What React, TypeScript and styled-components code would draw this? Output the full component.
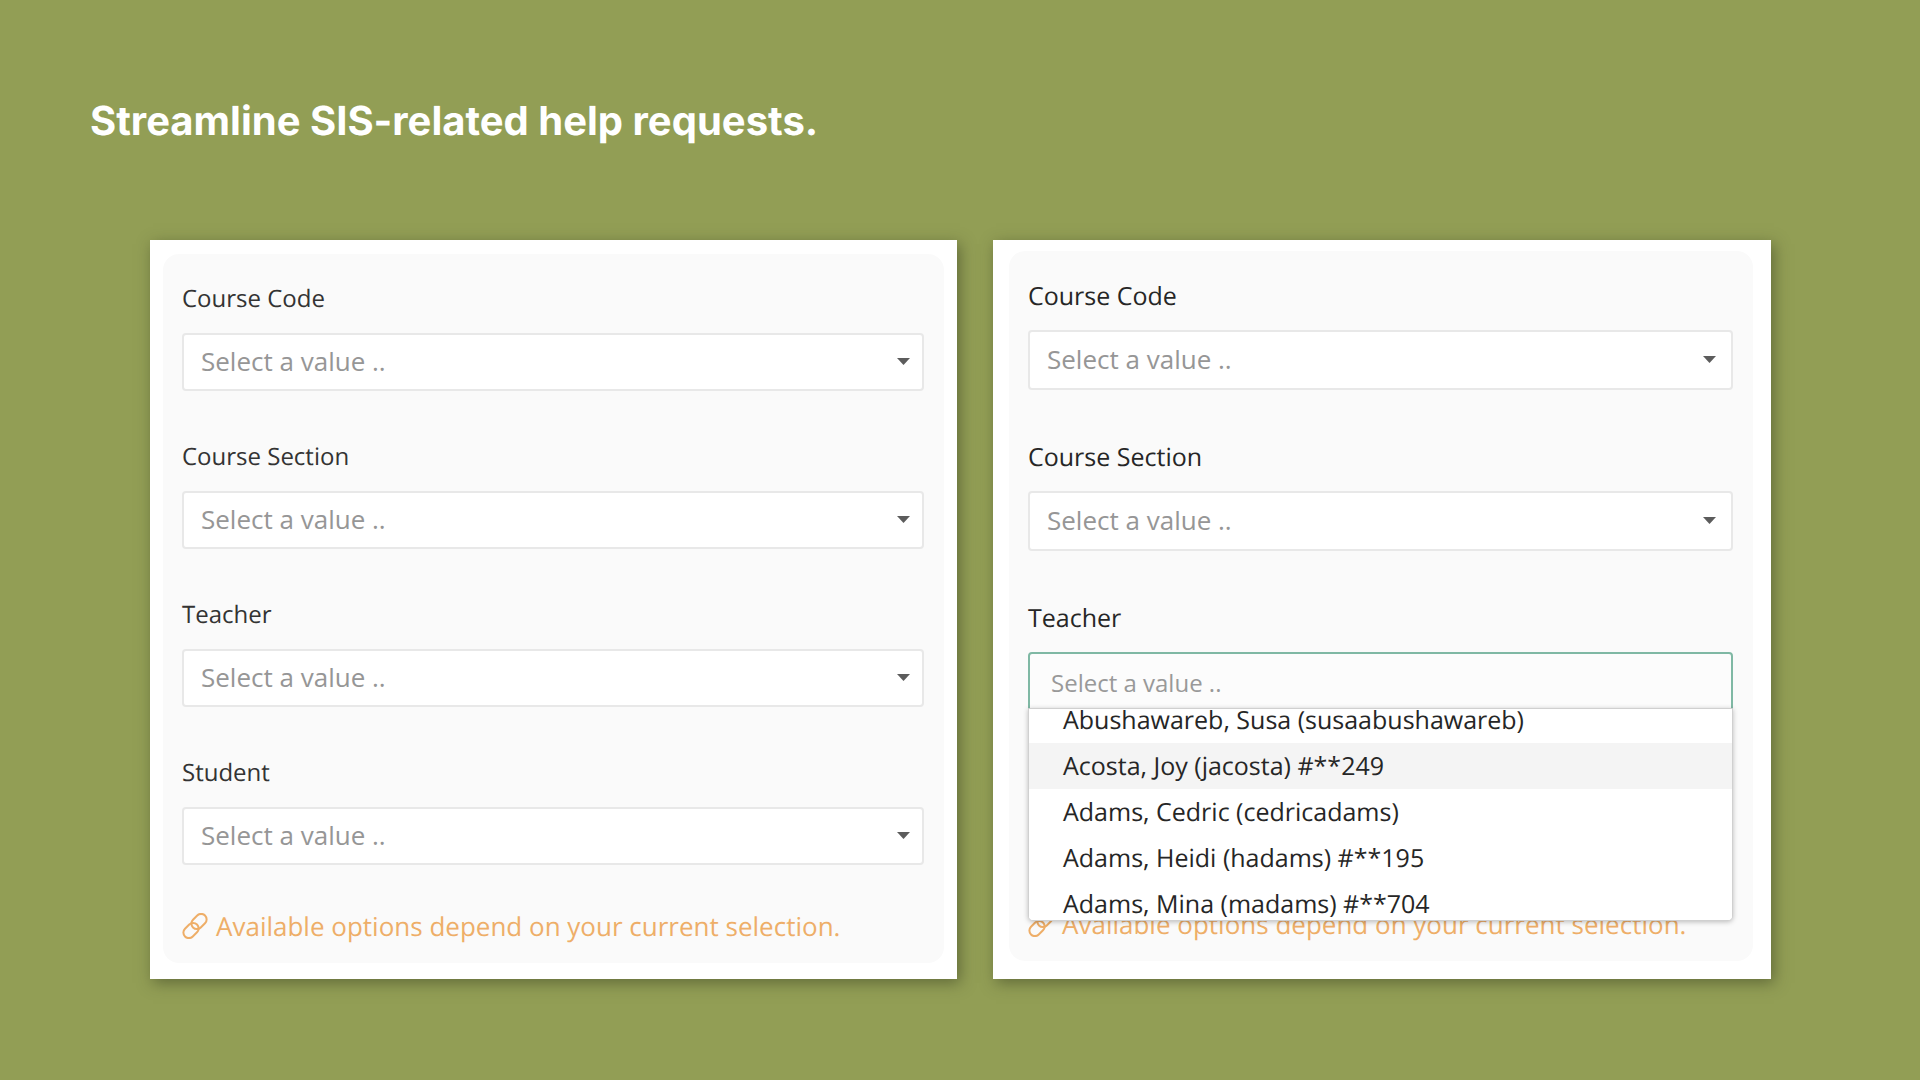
import React, { useId } from "react";
import styled, { createGlobalStyle } from "styled-components";

const GlobalStyle = createGlobalStyle`
  *, *::before, *::after { box-sizing: border-box; }
  body {
    margin: 0;
    background: #929e55;
    font-family: "Open Sans", "Noto Sans", sans-serif;
    text-rendering: geometricPrecision;
  }
`;

const Page = styled.main`
  min-height: 100vh;
  padding: 95px 149px 80px 150px;
  background: #929e55;
`;

const Title = styled.h1`
  margin: 0 0 93px -60px;
  color: #fff;
  font-family: Inter, "Open Sans", sans-serif;
  font-size: 40px;
  font-weight: 700;
  line-height: 52px;
`;

const Panels = styled.div`
  display: grid;
  grid-template-columns: 807fr 778fr;
  gap: 36px;
`;

const Card = styled.section<{ $pad: string }>`
  display: flex;
  padding: ${(p) => p.$pad};
  background: #fff;
  box-shadow: 3px 4px 14px rgba(50, 55, 30, 0.5);
`;

const Form = styled.form<{ $ink: string; $size: number }>`
  flex: 1;
  min-width: 0;
  display: flex;
  flex-direction: column;
  justify-content: space-between;
  gap: 44px;
  padding: 28px 20px 20px 19px;
  border-radius: 16px;
  background: #fafafa;
  color: ${(p) => p.$ink};
  font-size: ${(p) => p.$size}px;
  line-height: 34px;
`;

const Fields = styled.div<{ $gap: number }>`
  display: flex;
  flex-direction: column;
  gap: ${(p) => p.$gap}px;
`;

const Field = styled.div`
  display: flex;
  flex-direction: column;
  gap: 17px;
`;

const Label = styled.label`
  align-self: flex-start;
`;

const Control = styled.div`
  position: relative;
`;

const Select = styled.select<{ $height: number }>`
  display: block;
  width: 100%;
  height: ${(p) => p.$height}px;
  padding: 0 48px 2px 17px;
  appearance: none;
  border: 2px solid #e8e8e8;
  border-radius: 4px;
  background: #fff;
  color: #969696;
  font: inherit;
  font-size: 26px;
`;

const Arrow = styled.svg<{ $inset: number }>`
  position: absolute;
  top: 50%;
  right: ${(p) => p.$inset}px;
  width: 13px;
  height: 7px;
  margin-top: -4px;
  fill: #5c5c5c;
  pointer-events: none;
`;

const SearchInput = styled.input`
  display: block;
  width: 100%;
  height: 60px;
  padding: 0 21px;
  border: 2px solid #7fb8a4;
  border-radius: 4px;
  outline: none;
  background: #fcfcfc;
  color: #222;
  font: inherit;
  font-size: 24px;
  &::placeholder { color: #999; opacity: 1; }
`;

const Menu = styled.div`
  position: absolute;
  z-index: 1;
  top: 56px;
  left: 0;
  right: 0;
  height: 213px;
  overflow: hidden;
  border: 1px solid #d0d0d0;
  border-radius: 0 0 5px 5px;
  background: #fff;
  box-shadow: 0 1px 5px rgba(0, 0, 0, 0.25);
`;

const OptionList = styled.ul`
  margin: -12px 0 0;
  padding: 0;
  list-style: none;
`;

const Option = styled.li<{ $active: boolean }>`
  padding: 0 34px;
  background: ${(p) => (p.$active ? "#f4f4f4" : "#fff")};
  line-height: 46px;
  white-space: nowrap;
`;

const Note = styled.p`
  display: flex;
  align-items: center;
  gap: 8px;
  margin: 0;
  color: #eeae68;
  font-size: 26px;
`;

const LinkIcon = styled.svg`
  flex: none;
  width: 26px;
  height: 26px;
  fill: none;
  stroke: currentColor;
  stroke-width: 2;
`;

function SelectField({ label, height, inset }: { label: string; height: number; inset: number }) {
  const id = useId();
  return (
    <Field>
      <Label htmlFor={id}>{label}</Label>
      <Control>
        <Select id={id} $height={height}>
          <option>Select a value ..</option>
        </Select>
        <Arrow $inset={inset} viewBox="0 0 13 7" aria-hidden="true">
          <path d="M0 0h13L6.5 7z" />
        </Arrow>
      </Control>
    </Field>
  );
}

const teachers = [
  "Abushawareb, Susa (susaabushawareb)",
  "Acosta, Joy (jacosta) #**249",
  "Adams, Cedric (cedricadams)",
  "Adams, Heidi (hadams) #**195",
  "Adams, Mina (madams) #**704",
];

function SearchField({ label, options, active }: { label: string; options: string[]; active: number }) {
  const id = useId();
  return (
    <Field>
      <Label htmlFor={id}>{label}</Label>
      <Control>
        <SearchInput id={id} type="text" role="combobox" aria-expanded="true" aria-controls={`${id}-list`} placeholder="Select a value .." />
        <Menu>
          <OptionList id={`${id}-list`} role="listbox">
            {options.map((name, i) => (
              <Option key={name} role="option" aria-selected={i === active} $active={i === active}>
                {name}
              </Option>
            ))}
          </OptionList>
        </Menu>
      </Control>
    </Field>
  );
}

function DependencyNote() {
  return (
    <Note>
      <LinkIcon viewBox="0 0 26 26" aria-hidden="true">
        <rect x="-8.5" y="-5.5" width="17" height="11" rx="5.5" transform="translate(17 8.5) rotate(-45)" />
        <rect x="-8.5" y="-5.5" width="17" height="11" rx="5.5" transform="translate(9 17.5) rotate(-45)" />
      </LinkIcon>
      Available options depend on your current selection.
    </Note>
  );
}

export default function App() {
  return (
    <>
      <GlobalStyle />
      <Page>
        <Title>Streamline SIS-related help requests.</Title>
        <Panels>
          <Card $pad="14px 13px 16px">
            <Form $ink="#333" $size={24}>
              <Fields $gap={49}>
                {["Course Code", "Course Section", "Teacher", "Student"].map((label) => (
                  <SelectField key={label} label={label} height={58} inset={14} />
                ))}
              </Fields>
              <DependencyNote />
            </Form>
          </Card>
          <Card $pad="11px 18px 18px 16px">
            <Form $ink="#262626" $size={25}>
              <Fields $gap={50}>
                <SelectField label="Course Code" height={60} inset={17} />
                <SelectField label="Course Section" height={60} inset={17} />
                <SearchField label="Teacher" options={teachers} active={1} />
              </Fields>
              <DependencyNote />
            </Form>
          </Card>
        </Panels>
      </Page>
    </>
  );
}
